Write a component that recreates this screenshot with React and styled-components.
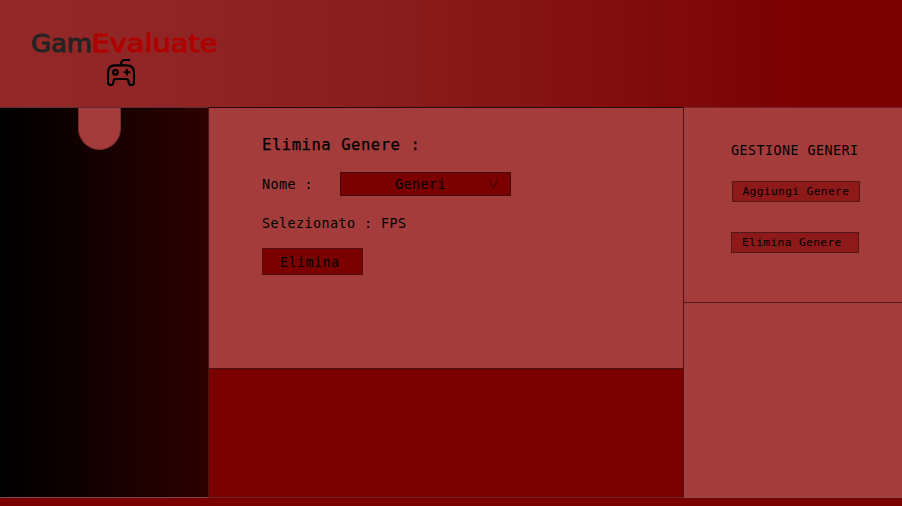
import React from 'react';
import styled, { createGlobalStyle } from 'styled-components';

const GlobalStyle = createGlobalStyle`
  * { box-sizing: border-box; }
  body { margin: 0; background: #7b0000; }
`;

const Page = styled.div`
  display: grid;
  grid-template-rows: 107px 391px 8px;
  width: 902px;
  height: 506px;
  overflow: hidden;
  color: #000;
  font-family: 'DejaVu Sans Mono', monospace;
`;

const Header = styled.header`
  padding: 28px 0 0 28px;
  background: linear-gradient(90deg, #922828 0%, #902525 19%, #8a1e1e 40%, #820d0d 70%, #7b0000 89%);
`;

const Logo = styled.svg`
  display: block;
`;

const Wordmark = styled.text`
  font-family: 'DejaVu Sans', sans-serif;
  font-size: 24px;
  fill: ${(p) => p.$color};
  stroke: ${(p) => p.$color};
  stroke-width: 0.9px;
`;

const Columns = styled.div`
  display: grid;
  grid-template-columns: 208px 476px 218px;
`;

const Sidebar = styled.nav`
  padding-left: 78px;
  border-top: 1px solid #602c2c;
  border-bottom: 1px solid #7b4a4a;
  background: linear-gradient(90deg, #000 0%, #160000 50%, #2c0000 100%);
`;

const MenuTab = styled.div`
  width: 42.5px;
  height: 42px;
  border: 1px solid #7c2929;
  border-top: 0;
  border-radius: 0 0 22px 22px;
  background: #a43c3c;
`;

const Main = styled.main`
  display: grid;
  grid-template-rows: 262px 1fr;
  border-left: 1px solid #4a1515;
  border-right: 1px solid #4a1515;
  border-bottom: 1px solid #6b2828;
  background: #7b0000;
`;

const FormPanel = styled.section`
  padding: 27px 0 0 53px;
  border-top: 1px solid #260909;
  border-bottom: 1px solid #471111;
  background: #a43c3c;
`;

const FormTitle = styled.h1`
  margin: 0 0 17px;
  font-size: 15.5px;
  line-height: 20px;
  font-weight: 400;
  letter-spacing: 0.56px;
  -webkit-text-stroke: 0.25px #000;
`;

const BodyText = styled.span`
  display: block;
  font-size: 13.4px;
  line-height: 18px;
  letter-spacing: 0.44px;
  white-space: pre;
`;

const FieldLabel = styled(BodyText)`
  padding-top: 2px;
`;

const Field = styled.div`
  display: grid;
  grid-template-columns: 78px 171px;
  align-items: center;
  height: 24px;
  margin-bottom: 19px;
`;

const Select = styled.button`
  display: flex;
  align-items: center;
  justify-content: space-between;
  height: 24px;
  padding: 1px 12px 0 54px;
  border: 1px solid #430909;
  background: #7b0000;
  color: #000;
  font-family: inherit;
`;

const Submit = styled.button`
  display: block;
  width: 101px;
  height: 27px;
  margin-top: 15px;
  padding: 3px 0 0 17px;
  border: 1px solid #4e1010;
  background: #7b0000;
  color: #000;
  font-family: inherit;
  text-align: left;
`;

const Aside = styled.aside`
  display: grid;
  grid-template-rows: 195px 1fr;
  border-top: 1px solid #702626;
  border-bottom: 1px solid #85504c;
  background: #a43c3c;
`;

const Actions = styled.section`
  padding: 34px 0 0 47px;
  border-bottom: 1px solid #541b1b;
`;

const ActionList = styled.div`
  display: grid;
  gap: 30px;
  margin-top: 21px;
`;

const Action = styled.button`
  width: 128px;
  height: 21px;
  margin-left: ${(p) => (p.$inset ? '0.5px' : '0')};
  padding: 1px 0 0 10px;
  border: 1px solid #561515;
  background: #8d1919;
  color: #000;
  font-family: inherit;
  font-size: 11.3px;
  line-height: 18px;
  letter-spacing: 0.32px;
  text-align: left;
  white-space: nowrap;
`;

const Footer = styled.footer`
  background: #7b0000;
`;

function GamEvaluateLogo() {
  return (
    <Logo width="194" height="62" viewBox="28 28 194 62" role="img" aria-label="GamEvaluate">
      <Wordmark $color="#222" x="31" y="52" textLength="61" lengthAdjust="spacingAndGlyphs">Gam</Wordmark>
      <Wordmark $color="#b00000" x="91.5" y="52" textLength="126" lengthAdjust="spacingAndGlyphs">Evaluate</Wordmark>
      <g fill="none" stroke="#000" strokeWidth="2.1" strokeLinecap="round" strokeLinejoin="round">
        <path d="M121.2 65v-1.5q0-3.5 3.700-3.500h4.500" />
        <path d="M115 65.400h12q7 0 7 7.500v9q0 3.100-2.700 3.100t-2.700-3.100q0-2.900-2.600-2.900h-10q-2.600 0-2.600 2.900 0 3.100-2.700 3.100t-2.700-3.100v-9q0-7.500 7-7.500Z" />
        <circle cx="115.4" cy="72.3" r="2.3" />
        <path d="M126.9 69.9v4.8M124.5 72.3h4.8" />
      </g>
    </Logo>
  );
}

export default function App() {
  return (
    <>
      <GlobalStyle />
      <Page>
        <Header><GamEvaluateLogo /></Header>
        <Columns>
          <Sidebar><MenuTab /></Sidebar>
          <Main>
            <FormPanel>
              <FormTitle>Elimina Genere :</FormTitle>
              <Field>
                <FieldLabel>Nome :</FieldLabel>
                <Select>
                  <BodyText>Generi</BodyText>
                  <svg width="9" height="11" viewBox="0 0 9 11" fill="none" stroke="#400000">
                    <path d="M.5.5 4.5 10 8.5.5" />
                  </svg>
                </Select>
              </Field>
              <BodyText>Selezionato : FPS</BodyText>
              <Submit><BodyText>Elimina</BodyText></Submit>
            </FormPanel>
          </Main>
          <Aside>
            <Actions>
              <BodyText>GESTIONE GENERI</BodyText>
              <ActionList>
                <Action $inset>Aggiungi Genere</Action>
                <Action>Elimina Genere</Action>
              </ActionList>
            </Actions>
          </Aside>
        </Columns>
        <Footer />
      </Page>
    </>
  );
}
